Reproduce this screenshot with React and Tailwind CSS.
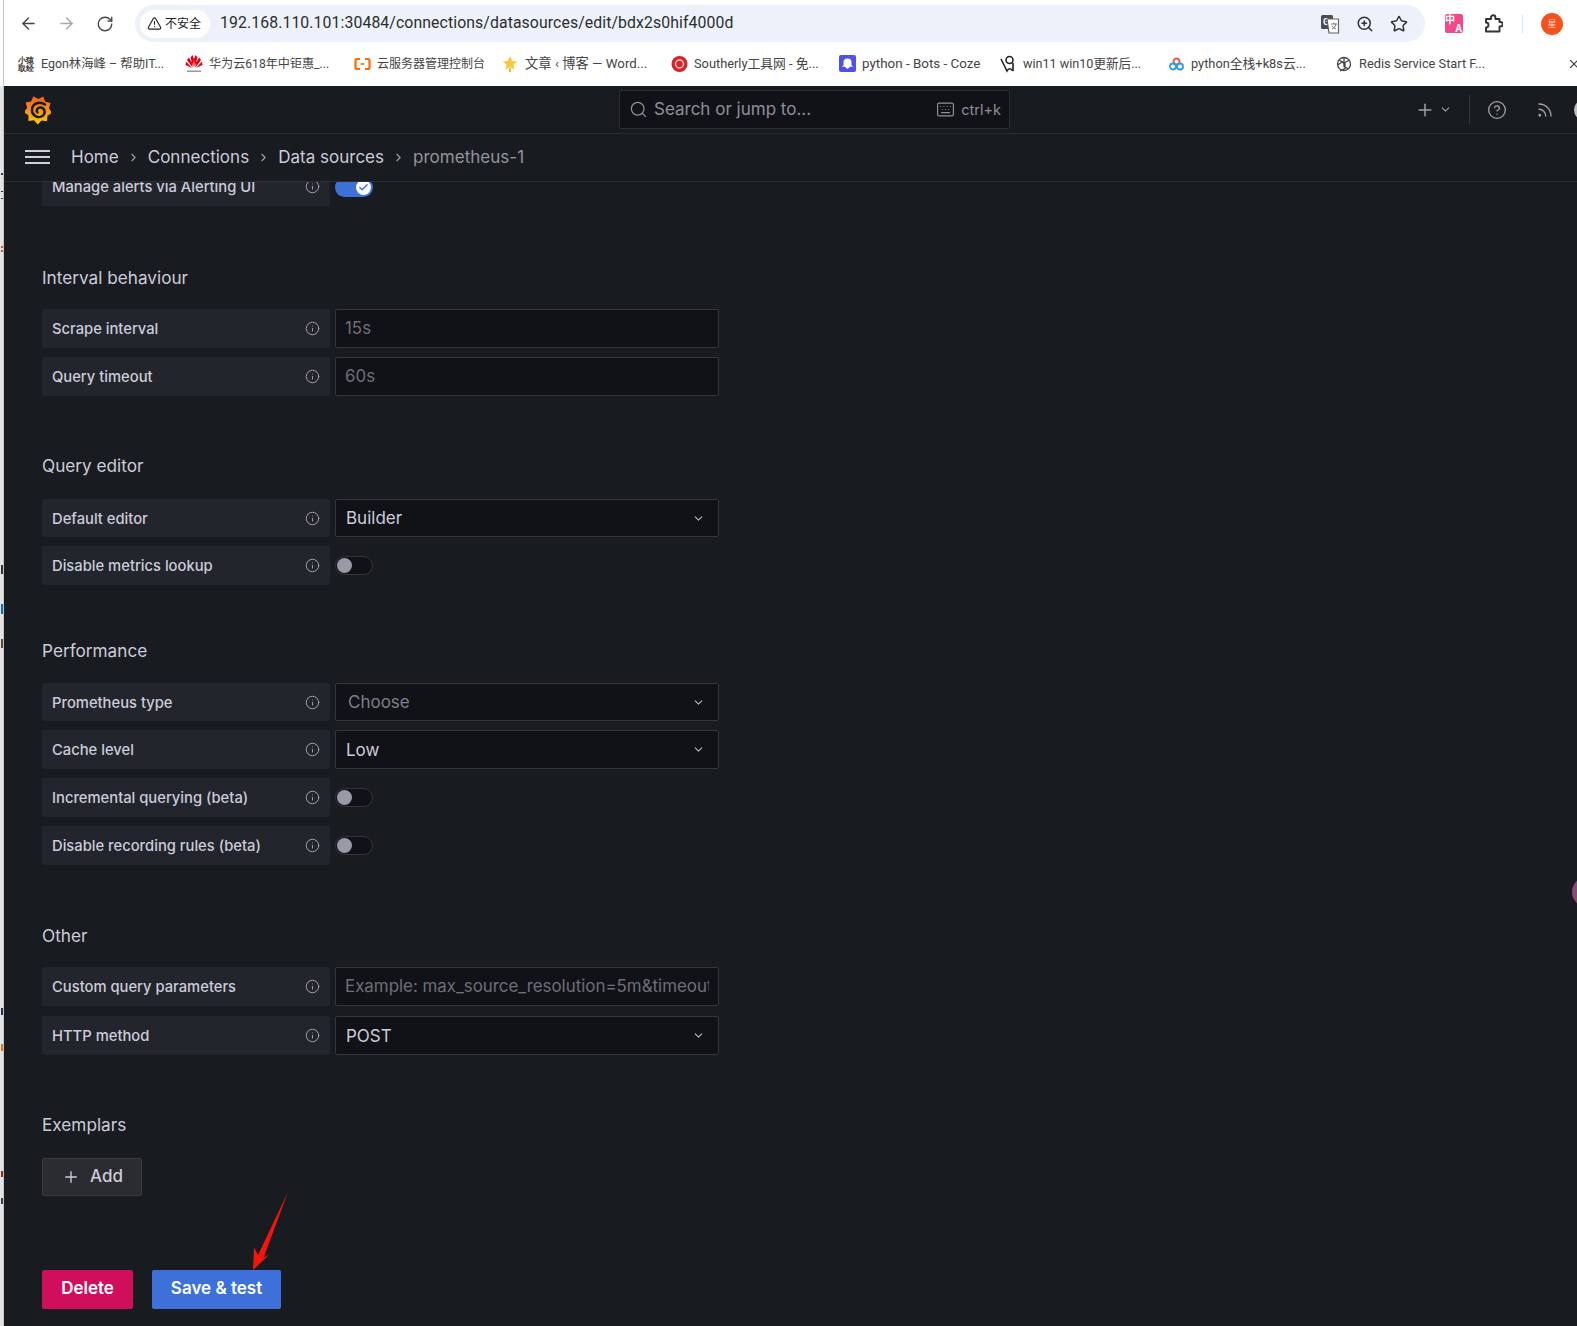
import { ArrowLeft, ArrowRight, RotateCw, TriangleAlert, ZoomIn, Star, Search, Keyboard, Plus, ChevronDown, ChevronRight, CircleHelp, Rss, Info, Check, X } from 'lucide-react';

const bookmarks = [
  { w: 'w-[168px]', size: 'text-[12.400px]', text: 'Egon林海峰 – 帮助IT...', icon: <div className="w-[17px] text-[8px] leading-[8px] font-bold text-[#333] text-center">小猿取经</div> },
  { w: 'w-[168px]', size: 'text-[12.100px]', text: '华为云618年中钜惠_...', icon: <svg width="18" height="18" viewBox="0 0 18 18"><g fill="#e60012"><path d="M8.400 12 5.500 2.500 7.500 0 9 4z" /><path d="M9.600 12 12.500 2.500 10.500 0 9 4z" /><path d="M7.600 12.500 2 5 3.800 2.500 7.400 8z" /><path d="M10.400 12.500 16 5 14.200 2.500 10.600 8z" /><path d="M7 13 .5 10 1 6.500z" /><path d="M11 13l6.500-3L17 6.500z" /></g><rect x="2" y="15.500" width="14" height="1.500" fill="#999" /></svg> },
  { w: 'w-[148px]', size: 'text-[12px]', text: '云服务器管理控制台', icon: <svg width="17" height="14" viewBox="0 0 17 14" fill="none" stroke="#ff6a00" strokeWidth="2.200"><path d="M6 2H3Q1.500 2 1.500 3.500v7Q1.500 12 3 12h3M11 2h3q1.500 0 1.500 1.500v7Q15.500 12 14 12h-3" /><path d="M6.500 7h4" strokeWidth="1.500" /></svg> },
  { w: 'w-[169px]', size: 'text-[13.300px]', text: '文章 ‹ 博客 — Word...', icon: <svg width="16" height="18" viewBox="0 0 16 18"><path d="M8 1l2.200 5 5 .5-3.700 3.300 1 5L8 12l-4.500 2.800 1-5L.8 6.500l5-.5z" fill="#f8c93a" /><path d="M7 13h2v4H7z" fill="#e8b93a" /></svg> },
  { w: 'w-[168px]', size: 'text-[12.800px]', text: 'Southerly工具网 - 免...', icon: <svg width="17" height="18" viewBox="0 0 17 18"><circle cx="8.500" cy="9" r="8" fill="#d8232a" /><circle cx="8.500" cy="9" r="4" fill="none" stroke="#f9c9c9" strokeWidth="1.500" /></svg> },
  { w: 'w-[161px]', size: 'text-[13.400px]', text: 'python - Bots - Coze', icon: <svg width="17" height="17" viewBox="0 0 17 17"><rect width="17" height="17" rx="2" fill="#4d53e8" /><path d="M4.500 10V7.500a4 4 0 0 1 8 0V10l1.500 2-2.500-.5L8.500 14 5.500 11.500 3 12z" fill="#fff" /></svg> },
  { w: 'w-[168px]', size: 'text-[12.600px]', text: 'win11 win10更新后...', icon: <svg width="17" height="18" viewBox="0 0 17 18" fill="none" stroke="#222" strokeWidth="1.600"><path d="M1 4l6 12c1.500-3 4-3 6 0" /><circle cx="9.500" cy="5" r="3.500" /><path d="M13 8v8" /></svg> },
  { w: 'w-[168px]', size: 'text-[12.800px]', text: 'python全栈+k8s云...', icon: <svg width="17" height="17" viewBox="0 0 17 17" fill="none" strokeWidth="1.800"><circle cx="8.500" cy="5.500" r="3" stroke="#e2574c" /><circle cx="5" cy="10.500" r="3" stroke="#2e9be6" /><circle cx="12" cy="10.500" r="3" stroke="#2e9be6" /></svg> },
  { w: 'w-[160px]', size: 'text-[12.800px]', text: 'Redis Service Start F...', icon: <svg width="16" height="16" viewBox="0 0 16 16" fill="none" stroke="#444" strokeWidth="1.300"><circle cx="8" cy="8" r="6.500" /><path d="M8 1.500v9l4.500 2.500M3 4l6 3.500v5L4 15M13.500 4 7 7.500M1.500 9 7 5.500" /></svg> },
];

// bits of the window behind that stick out on the left edge
const edgeMarks = [
  { top: 173, h: 2, color: '#27405f' },
  { top: 191, h: 1, color: '#222' },
  { top: 198, h: 1, color: '#27405f' },
  { top: 246, h: 2, color: '#c8601a' },
  { top: 250, h: 2, color: '#c8601a' },
  { top: 565, h: 9, color: '#333' },
  { top: 604, h: 10, color: '#0a6cc4' },
  { top: 639, h: 9, color: '#5a4a30' },
  { top: 1008, h: 7, color: '#27304f' },
  { top: 1044, h: 7, color: '#c87a2a' },
  { top: 1171, h: 6, color: '#8a2a10' },
  { top: 1198, h: 6, color: '#3a3a50' },
];

const gearPoints = Array.from({ length: 18 }, (_, i) => {
  const r = i % 2 === 0 ? 14.5 : 11;
  const a = (i / 18) * Math.PI * 2 - 1.9;
  return `${(13 + r * Math.cos(a)).toFixed(1)},${(15 + r * Math.sin(a)).toFixed(1)}`;
}).join(' ');

function BrowserBar() {
  return (
    <div className="bg-white h-[86px] w-full shrink-0 text-[#333]">
      <div className="flex items-center h-[46px] pt-[1px]">
        <div className="flex items-center w-[135px] pl-[19px] gap-[19px]">
          <ArrowLeft size={19} strokeWidth={1.800} className="text-[#474747]" />
          <ArrowRight size={19} strokeWidth={1.800} className="text-[#a8a8a8]" />
          <RotateCw size={18} strokeWidth={1.800} className="ml-[1px] text-[#474747]" />
        </div>
        <div className="w-[1290px] h-[37px] rounded-full bg-[#edf2fa] flex items-center pl-[5px] pr-[17px]">
          <div className="w-[70px] h-[28px] pb-[1px] rounded-full bg-white flex items-center pl-[7px] gap-[3px] text-[12px] text-[#222] font-['Noto_Sans_CJK_SC',sans-serif]">
            <TriangleAlert size={15} strokeWidth={1.800} className="text-[#222]" />
            <span>不安全</span>
          </div>
          <span className="ml-[10px] pb-[2px] text-[15.800px] text-[#2b2d30] font-['Roboto',sans-serif] tracking-[0.1px]">192.168.110.101:30484/connections/datasources/edit/bdx2s0hif4000d</span>
          <div className="ml-auto flex items-center gap-[16px]">
            <svg width="20" height="20" viewBox="0 0 20 20">
              <rect x="1" y="1" width="12" height="14" rx="1.500" fill="#4a4d52" />
              <text x="3" y="11" fontSize="9" fontWeight="700" fill="#fff" fontFamily="Roboto, sans-serif">G</text>
              <path d="M7 5h11.500v14H9z" fill="#fff" stroke="#5f6368" strokeWidth="1.200" />
              <path d="M11 10h6M14 8.500V10M16 10c-.5 2.500-2 4-4 5M12 12c1 1.500 2.500 2.500 4 3" fill="none" stroke="#5f6368" strokeWidth="0.900" />
            </svg>
            <ZoomIn size={18} strokeWidth={2} className="text-[#333]" />
            <Star size={18} strokeWidth={2} className="text-[#333]" />
          </div>
        </div>
        <div className="ml-[20px] w-[18px] h-[19px] rounded-[2px] bg-[#ef4b8c] text-white text-[10px] font-bold font-['Noto_Sans_CJK_SC',sans-serif] flex flex-col">
          <div className="h-[9px] leading-[9px]">中</div>
          <div className="h-[9px] leading-[9px] text-right pr-[1px]">A</div>
        </div>
        <svg className="ml-[21px]" width="19" height="19" viewBox="0 0 19 19" fill="none" stroke="#333" strokeWidth="1.900" strokeLinejoin="round">
          <path d="M2 5H7V3.500a2.200 2.200 0 0 1 4.400 0V5H15.500V8h1a2.200 2.200 0 0 1 0 4.400h-1V17.500H2V13.500a2.500 2.500 0 0 0 0-5z" />
        </svg>
        <div className="ml-[19px] w-px h-[18px] bg-[#d3e3fd]" />
        <div className="ml-[18px] w-[22px] h-[22px] rounded-full bg-[#f4511e] text-[#ffd9c9] text-[9px] flex items-center justify-center font-['Noto_Sans_CJK_SC',sans-serif]">星</div>
      </div>
      <div className="flex items-center h-[36px] pl-[17px] relative">
        {bookmarks.map((b) => (
          <div key={b.text} className={`${b.w} flex items-center gap-[6px] shrink-0`}>
            <div className="w-[18px] flex justify-center shrink-0">{b.icon}</div>
            <span className={`${b.size} text-[#444] whitespace-nowrap font-['Roboto','Noto_Sans_CJK_SC',sans-serif]`}>{b.text}</span>
          </div>
        ))}
        <X size={14} strokeWidth={2} className="absolute right-[-4px] top-[11px] text-[#444]" />
      </div>
    </div>
  );
}

function GrafanaLogo() {
  return (
    <svg width="26" height="30" viewBox="0 0 26 30">
      <defs>
        <linearGradient id="gf" x1="0" y1="1" x2="0" y2="0">
          <stop offset="0" stopColor="#fbca0a" />
          <stop offset="1" stopColor="#f05a28" />
        </linearGradient>
      </defs>
      <polygon points={gearPoints} fill="url(#gf)" />
      <path d="M20 9.500C15 6 7.500 8 7 14.500 6.500 20 12 23.500 16.500 21.500 21 19.500 20.500 13.500 16 12.500 12.500 12 10.500 15.500 12.500 17.500" fill="none" stroke="#181b1f" strokeWidth="2.400" strokeLinecap="round" />
    </svg>
  );
}

function TopBars() {
  return (
    <>
      <div className="h-[48px] flex items-center border-b border-[#2c2e33] shrink-0">
        <div className="w-[615px] pl-[21px] shrink-0"><GrafanaLogo /></div>
        <div className="w-[391px] h-[39px] shrink-0 bg-[#111217] border border-[#2c2e33] rounded-[2px] flex items-center pl-[9px] pr-[8px] text-[#8f8f98]">
          <Search size={19} strokeWidth={1.600} />
          <span className="ml-[6px] text-[17px]">Search or jump to...</span>
          <Keyboard size={19} strokeWidth={1.500} className="ml-auto" />
          <span className="ml-[6px] text-[14.500px]">ctrl+k</span>
        </div>
        <div className="flex items-center text-[#9fa0a8] pl-[405px]">
          <Plus size={20} strokeWidth={1.800} />
          <ChevronDown size={13} strokeWidth={2} className="ml-[4px]" />
          <div className="ml-[17px] w-px h-[29px] bg-[#34363c]" />
          <CircleHelp size={20} strokeWidth={1.600} className="ml-[17px]" />
          <Rss size={18} strokeWidth={1.800} className="ml-[29px]" />
          <div className="ml-[20px] w-[22px] h-[22px] rounded-full bg-[#bfc0c4] shrink-0" />
        </div>
      </div>
      <div className="h-[48px] pb-[1px] flex items-center border-b border-[#2c2e33] shrink-0 text-[17.050px] text-[#ccccdc]">
        <div className="w-[25px] ml-[21px] flex flex-col gap-[3.500px] shrink-0">
          <div className="h-[2.500px] bg-[#d0d0dc]" />
          <div className="h-[2.500px] bg-[#d0d0dc]" />
          <div className="h-[2.500px] bg-[#d0d0dc]" />
        </div>
        <span className="ml-[21px]">Home</span>
        <ChevronRight size={13} strokeWidth={2} className="mx-[8px] text-[#9fa0a8]" />
        <span>Connections</span>
        <ChevronRight size={13} strokeWidth={2} className="mx-[8px] text-[#9fa0a8]" />
        <span>Data sources</span>
        <ChevronRight size={13} strokeWidth={2} className="mx-[8px] text-[#9fa0a8]" />
        <span className="text-[#94959e]">prometheus-1</span>
      </div>
    </>
  );
}

function Row({ label, h = 'h-[39px]', className = '', children }) {
  return (
    <div className={`flex gap-[5px] ${h} ${className}`}>
      <div className="w-[288px] bg-[#22252b] rounded-[2px] flex items-center pl-[10px] pr-[10px] text-[14.750px] font-medium text-[#ccccdc]">
        <span className="pt-[2px]">{label}</span>
        <Info size={15} strokeWidth={1.500} className="ml-auto text-[#a8a8b3]" />
      </div>
      {children}
    </div>
  );
}

function TextField({ value }) {
  return (
    <div className="w-[384px] bg-[#111217] border border-[#34363c] rounded-[2px] flex items-center pt-[1px] pl-[9px] pr-[9px] text-[16.900px] text-[#6e6f78]">
      <div className="overflow-hidden whitespace-nowrap">{value}</div>
    </div>
  );
}

function SelectField({ value, muted }) {
  return (
    <div className={`w-[384px] bg-[#111217] border border-[#34363c] rounded-[2px] flex items-center text-[17px] ${muted ? 'pl-[12px] text-[#7e7f88]' : 'pl-[10px] text-[#ccccdc]'} pr-[13px]`}>
      <span className="pt-[2px]">{value}</span>
      <ChevronDown size={13} strokeWidth={2} className="ml-auto text-[#b8b8c2]" />
    </div>
  );
}

function Toggle({ on }) {
  if (on) {
    return (
      <div className="w-[38px] h-[19px] self-center rounded-full bg-[#3d71d9] flex items-center justify-end pr-[2px]">
        <div className="w-[15px] h-[15px] rounded-full bg-white flex items-center justify-center">
          <Check size={11} strokeWidth={3} className="text-[#3d71d9]" />
        </div>
      </div>
    );
  }
  return (
    <div className="w-[38px] h-[19px] self-center rounded-full bg-[#111217] border border-[#34363c] flex items-center pl-[1px]">
      <div className="w-[15px] h-[15px] rounded-full bg-[#9a9aa6]" />
    </div>
  );
}

function Heading({ className, children }) {
  return <div className={`h-[24px] leading-[24px] text-[17.200px] text-[#ccccdc] ${className}`}>{children}</div>;
}

export default function App() {
  return (
    <div className="w-[1577px] h-[1326px] overflow-hidden relative bg-white font-['Inter',sans-serif] flex flex-col">
      <BrowserBar />
      <div className="flex-1 pl-[3px] bg-[#e4e4e4] flex overflow-hidden">
        <div className="flex-1 border-l border-[#c4c4c4] bg-[#181b1f] flex flex-col overflow-hidden">
          <TopBars />
          <div className="flex-1 overflow-hidden pl-[38px]">
            <Row label="Manage alerts via Alerting UI" className="-mt-[15px]">
              <div className="self-center pt-[1px]">
                <Toggle on />
              </div>
            </Row>

            <Heading className="mt-[60px] mb-[19px]">Interval behaviour</Heading>
            <Row label="Scrape interval"><TextField value="15s" /></Row>
            <Row label="Query timeout" className="mt-[9px]"><TextField value="60s" /></Row>

            <Heading className="mt-[58px] mb-[21px]">Query editor</Heading>
            <Row label="Default editor" h="h-[38px]"><SelectField value="Builder" /></Row>
            <Row label="Disable metrics lookup" className="mt-[9px]"><Toggle /></Row>

            <Heading className="mt-[54px] mb-[20px]">Performance</Heading>
            <Row label="Prometheus type" h="h-[38px]"><SelectField value="Choose" muted /></Row>
            <Row label="Cache level" className="mt-[9px]"><SelectField value="Low" /></Row>
            <Row label="Incremental querying (beta)" className="mt-[9px]"><Toggle /></Row>
            <Row label="Disable recording rules (beta)" className="mt-[9px]"><Toggle /></Row>

            <Heading className="mt-[59px] mb-[19px]">Other</Heading>
            <Row label="Custom query parameters">
              <TextField value="Example: max_source_resolution=5m&timeout=10" />
            </Row>
            <Row label="HTTP method" className="mt-[10px]"><SelectField value="POST" /></Row>

            <Heading className="mt-[58px] mb-[21px]">Exemplars</Heading>
            <div className="w-[100px] h-[38px] bg-[#2b2c32] border border-[#3a3b41] rounded-[2px] flex items-center pl-[19px] gap-[10px] text-[17px] font-medium text-[#ccccdc]">
              <Plus size={18} strokeWidth={1.800} />
              <span>Add</span>
            </div>

            <div className="mt-[74px] flex gap-[19px] text-[17px] font-semibold text-white">
              <div className="w-[91px] h-[39px] pb-[2px] bg-[#d10e5c] rounded-[2px] flex items-center justify-center">Delete</div>
              <div className="w-[129px] h-[39px] pb-[1px] bg-[#3d71d9] rounded-[2px] flex items-center justify-center">Save &amp; test</div>
            </div>
          </div>
        </div>
      </div>

      {edgeMarks.map((m) => (
        <div key={m.top} className="absolute left-[1px] w-[2px]" style={{ top: m.top, height: m.h, backgroundColor: m.color }} />
      ))}
      <div className="absolute left-[3px] top-0 w-px h-[86px] bg-[#c4c4c4]" />
      <div className="absolute left-[1572px] top-[877px] w-[30px] h-[30px] rounded-full bg-[#8a4a73]" />
      <svg className="absolute left-[248px] top-[1190px]" width="44" height="84" viewBox="0 0 44 84">
        <path d="M40 2 15.500 68 L22 64 L5 80 L6 57 L10 65z" fill="#f5150f" />
      </svg>
    </div>
  );
}
